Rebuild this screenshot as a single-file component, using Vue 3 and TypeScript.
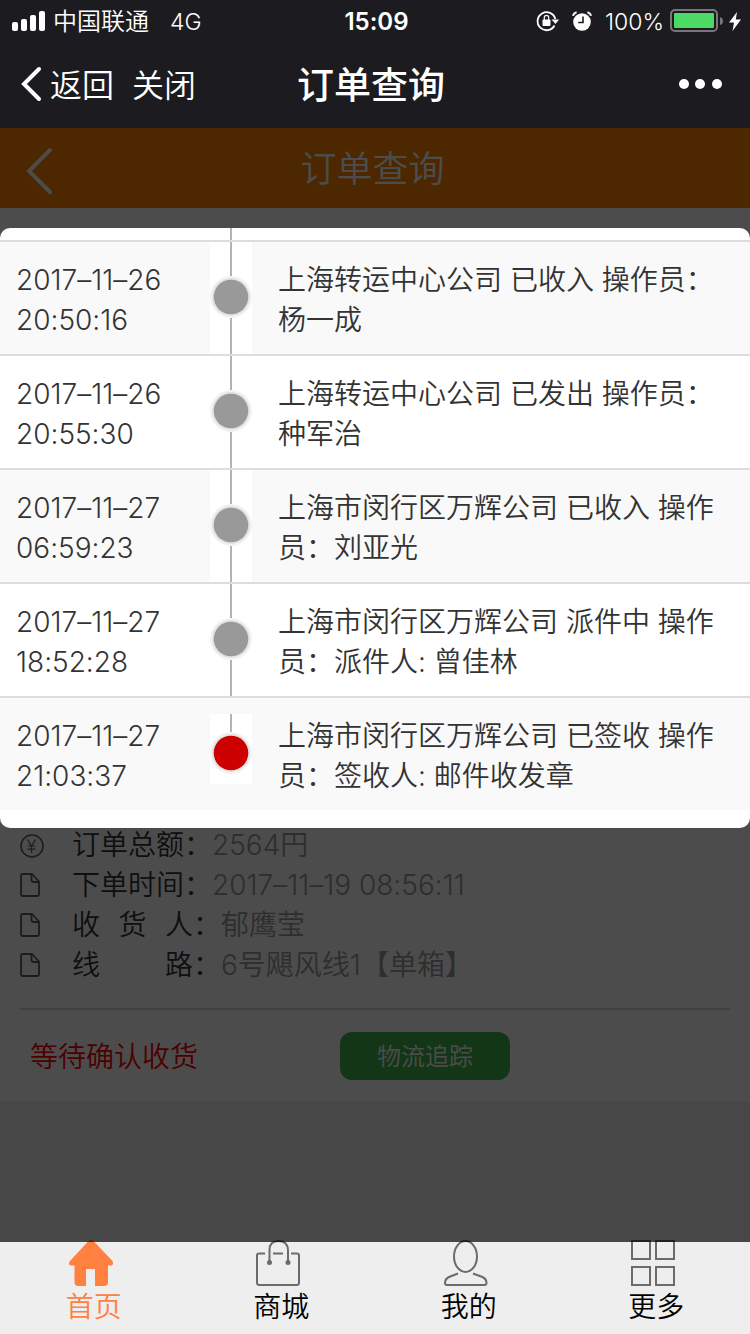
<script setup lang="ts">
interface TrackEntry {
  date: string
  time: string
  text: string
  done?: boolean
}

interface OrderField {
  icon: 'yen' | 'doc'
  label: string
  value: string
  wide?: boolean
}

interface Tab {
  id: 'home' | 'shop' | 'mine' | 'more'
  label: string
}

const entries: TrackEntry[] = [
  { date: '2017–11–26', time: '20:50:16', text: '上海转运中心公司 已收入 操作员：杨一成' },
  { date: '2017–11–26', time: '20:55:30', text: '上海转运中心公司 已发出 操作员：种军治' },
  { date: '2017–11–27', time: '06:59:23', text: '上海市闵行区万辉公司 已收入 操作员：刘亚光' },
  { date: '2017–11–27', time: '18:52:28', text: '上海市闵行区万辉公司 派件中 操作员：派件人: 曾佳林' },
  { date: '2017–11–27', time: '21:03:37', text: '上海市闵行区万辉公司 已签收 操作员：签收人: 邮件收发章', done: true },
]

const fields: OrderField[] = [
  { icon: 'yen', label: '订单总额', value: '2564円' },
  { icon: 'doc', label: '下单时间', value: '2017–11–19 08:56:11' },
  { icon: 'doc', label: '收 货 人', value: '郁鹰莹', wide: true },
  { icon: 'doc', label: '线 路', value: '6号飓风线1【单箱】', wide: true },
]

const tabs: Tab[] = [
  { id: 'home', label: '首页' },
  { id: 'shop', label: '商城' },
  { id: 'mine', label: '我的' },
  { id: 'more', label: '更多' },
]
</script>

<template>
  <div class="screen">
    <div class="status">
      <div class="status-left">
        <svg width="34" height="20" viewBox="0 0 34 20" fill="#fff" aria-hidden="true">
          <rect x="0" y="11" width="6" height="9" rx="2" />
          <rect x="9" y="8" width="6" height="12" rx="2" />
          <rect x="18" y="4" width="6" height="16" rx="2" />
          <rect x="27" y="0" width="6" height="20" rx="2" />
        </svg>
        <span class="carrier">中国联通</span>
        <span>4G</span>
      </div>
      <div class="clock">15:09</div>
      <div class="status-right">
        <svg class="lock" width="24" height="22" viewBox="0 0 24 22" aria-hidden="true">
          <path d="M18.500 15.500A9 9 0 1 1 19.300 9" fill="none" stroke="#fff" stroke-width="1.800" />
          <path d="M15.500 9.500h7.500L19.500 14z" fill="#fff" />
          <rect x="6.500" y="9.500" width="8" height="6.500" rx="1" fill="#fff" />
          <path d="M8.300 10V7.600a2.200 2.200 0 0 1 4.400 0V10" fill="none" stroke="#fff" stroke-width="1.200" />
        </svg>
        <svg class="alarm" width="20" height="20" viewBox="0 0 20 20" aria-hidden="true">
          <circle cx="10" cy="11" r="8.800" fill="#fff" />
          <path d="M.9 4.800Q1.700 1.900 4.600 1.200M19.100 4.800Q18.300 1.900 15.400 1.200" fill="none" stroke="#fff" stroke-width="2" />
          <path d="M11 5.500V11.500H6.200" fill="none" stroke="#1c1b20" stroke-width="1.600" />
        </svg>
        <span>100%</span>
        <svg class="battery" width="54" height="24" viewBox="0 0 54 24" aria-hidden="true">
          <rect x="1" y="1" width="46" height="21" rx="4" fill="none" stroke="#77767a" stroke-width="2" />
          <rect x="4" y="4" width="40" height="15" rx="1" fill="#4cd964" />
          <path d="M50 8q3 1 3 4t-3 4z" fill="#77767a" />
        </svg>
        <svg width="12" height="19" viewBox="0 0 12 19" fill="#fff" aria-hidden="true">
          <path d="M8 0L0 10.500H5L3.500 19L12 7.500H6.800z" />
        </svg>
      </div>
    </div>

    <header class="navbar">
      <div class="nav-actions">
        <button type="button" class="nav-btn">
          <svg width="22" height="36" viewBox="0 0 22 36" aria-hidden="true">
            <path d="M19 3L4 18L19 33" fill="none" stroke="#fff" stroke-width="4" stroke-linecap="round" />
          </svg>
          <span class="nav-text">返回</span>
        </button>
        <button type="button" class="nav-btn"><span class="nav-text">关闭</span></button>
      </div>
      <h1 class="nav-title">订单查询</h1>
      <button type="button" class="nav-more" aria-label="更多选项">
        <svg width="44" height="12" viewBox="0 0 44 12" fill="#fff" aria-hidden="true">
          <circle cx="6" cy="6" r="5" />
          <circle cx="22" cy="6" r="5" />
          <circle cx="39" cy="6" r="5" />
        </svg>
      </button>
    </header>

    <main class="view">
      <div class="page-head">
        <button type="button" class="page-back" aria-label="返回">
          <svg width="28" height="48" viewBox="0 0 28 48" aria-hidden="true">
            <path d="M25 3L4 24L25 45" fill="none" stroke="#fff" stroke-width="4" stroke-linecap="round" />
          </svg>
        </button>
        <h2 class="page-title">订单查询</h2>
      </div>

      <section class="order">
        <dl class="fields">
          <div v-for="field in fields" :key="field.label" class="field">
            <svg v-if="field.icon === 'yen'" class="field-icon" width="24" height="26" viewBox="0 0 24 26" fill="none" stroke="#606060" stroke-width="1.600" aria-hidden="true">
              <circle cx="12" cy="14" r="11" />
              <path stroke-width="1.200" d="M7.500 7.500L11.500 14L15.500 7.500M11.500 14V21M7.500 14H15.500M7.500 17.200H15.500" />
            </svg>
            <svg v-else class="field-icon" width="24" height="26" viewBox="0 0 24 26" fill="none" stroke="#606060" stroke-width="1.800" stroke-linejoin="round" aria-hidden="true">
              <path d="M12 2H2.500Q1 2 1 3.500V22.500Q1 24 2.500 24H17.500Q19 24 19 22.500V9.500zM11.500 2V8Q11.500 10 13.500 10H19" />
            </svg>
            <dt class="label"><span class="label-text" :class="{ wide: field.wide }">{{ field.label }}</span>：</dt>
            <dd class="value">{{ field.value }}</dd>
          </div>
        </dl>
        <div class="order-foot">
          <span class="state">等待确认收货</span>
          <button type="button" class="trace-btn">物流追踪</button>
        </div>
      </section>

      <div class="mask">
        <div class="dialog" role="dialog" aria-label="物流追踪">
          <table class="track">
            <tbody>
              <tr class="lead">
                <td class="when"></td>
                <td class="rail"></td>
                <td class="what"></td>
              </tr>
              <tr v-for="entry in entries" :key="entry.date + entry.time" :class="{ done: entry.done }">
                <td class="when">
                  <span class="stamp">{{ entry.date }}</span>
                  <span class="stamp">{{ entry.time }}</span>
                </td>
                <td class="rail">
                  <svg width="42" height="70" viewBox="0 0 42 70" aria-hidden="true">
                    <template v-if="entry.done">
                      <rect width="42" height="70" fill="#fff" />
                      <rect x="20" width="2" height="20" fill="#b3b3b3" />
                    </template>
                    <circle cx="21" cy="39" r="21" fill="#f3f3f3" />
                    <circle cx="21" cy="39" r="19" fill="#e2e2e2" />
                    <circle cx="21" cy="39" r="17.300" :fill="entry.done ? '#c00' : '#999'" />
                  </svg>
                </td>
                <td class="what">{{ entry.text }}</td>
              </tr>
            </tbody>
          </table>
        </div>
      </div>
    </main>

    <nav class="tabbar">
      <a v-for="tab in tabs" :key="tab.id" href="#" class="tab" :class="{ active: tab.id === 'home' }">
        <svg class="tab-icon" width="44" height="46" viewBox="0 0 44 46" fill="none" stroke="#6b6b6b" stroke-width="2" aria-hidden="true">
          <path v-if="tab.id === 'home'" fill="#ff8040" stroke="none" d="M19.500 1Q22 -1 24.500 1L43.500 21Q45 25.500 42 25.500H39V42Q39 46 35 46H26V29H17V46H9Q5.500 46 5.500 42V25.500H2Q-1 25.500 .5 21.500z" />
          <g v-else-if="tab.id === 'shop'">
            <path d="M9 13.500H3Q1 13.500 1 15.500V42.500Q1 45 3.500 45H40.500Q43 45 43 42.500V15.500Q43 13.500 41 13.500H35M17 13.500H27" />
            <path d="M13.500 22V10Q13.500 1 22.500 1T32 10V22" />
            <circle cx="13.500" cy="22.500" r="1.500" fill="#6b6b6b" />
            <circle cx="32" cy="22.500" r="1.500" fill="#6b6b6b" />
          </g>
          <g v-else-if="tab.id === 'mine'">
            <ellipse cx="21.500" cy="16.500" rx="11.500" ry="15.500" />
            <path d="M14 33.500L5 37Q1 39 1 43Q1 45 3 45H40.500Q42.500 45 42.500 43Q42.500 39 38.500 37L29 33.500" />
          </g>
          <g v-else>
            <rect x="1" y="1" width="18" height="18" />
            <rect x="25" y="1" width="18" height="18" />
            <rect x="1" y="27" width="18" height="18" />
            <rect x="25" y="27" width="18" height="18" />
          </g>
        </svg>
        <span class="tab-label">{{ tab.label }}</span>
      </a>
    </nav>
  </div>
</template>

<style>
body {
  margin: 0;
}
</style>

<style scoped>
.screen {
  display: flex;
  flex-direction: column;
  min-height: 100vh;
  font-family: Inter, "Noto Sans CJK SC", sans-serif;
  font-size: 28px;
  font-weight: 350;
  line-height: 40px;
  font-feature-settings: "calt" 0;
  color: #333;
}

button {
  padding: 0;
  border: 0;
  background: none;
  font: inherit;
  color: inherit;
}

svg {
  display: block;
  flex: none;
}

.status {
  display: grid;
  grid-template-columns: 1fr auto 1fr;
  align-items: center;
  height: 40px;
  padding: 0 9px 0 12px;
  background: #1c1b20;
  color: #fff;
  font-size: 23px;
}

.status-left,
.status-right {
  display: flex;
  align-items: center;
}

.status-right {
  justify-content: flex-end;
}

.status span,
.clock {
  padding-top: 2px;
}

.carrier {
  margin: 0 21px 0 7px;
  font-size: 24px;
}

.clock {
  font-size: 24px;
  font-weight: 600;
}

.lock {
  margin-right: 12px;
}

.alarm {
  margin-right: 13px;
}

.battery {
  margin: 0 5px 0 6px;
}

.navbar {
  display: grid;
  grid-template-columns: 1fr auto 1fr;
  align-items: center;
  height: 88px;
  padding: 0 28px 0 20px;
  background: #1c1b20;
  color: #fff;
}

.nav-actions {
  display: flex;
  gap: 18px;
}

.nav-btn {
  display: flex;
  align-items: center;
  gap: 8px;
  font-size: 32px;
}

.nav-text {
  padding-top: 4px;
}

.nav-title {
  margin: 0;
  padding-top: 4px;
  font-size: 37px;
  font-weight: 500;
}

.nav-more {
  justify-self: end;
}

.view {
  position: relative;
  display: flex;
  flex: 1;
  flex-direction: column;
  background: #ededed;
}

.page-head {
  display: grid;
  grid-template-columns: 1fr auto 1fr;
  align-items: center;
  height: 80px;
  padding: 0 30px 0 25px;
  background: #ff8200;
  color: #fff;
}

.page-back {
  justify-self: start;
  margin-top: 6px;
}

.page-title {
  margin: 0;
  padding-top: 2px;
  font-size: 36px;
  font-weight: 350;
}

.order {
  display: flex;
  flex: 1;
  flex-direction: column;
  justify-content: flex-end;
  margin-bottom: 140px;
  padding: 0 20px;
  background: #fff;
}

.fields {
  margin: 0;
  padding-bottom: 23px;
  border-bottom: 2px solid #d8d8d8;
}

.field {
  display: flex;
  align-items: center;
}

.field-icon {
  margin-right: 28px;
}

.label {
  display: flex;
}

.label-text {
  width: 112px;
  text-align-last: justify;
}

.label-text.wide {
  width: 121px;
}

.value {
  margin: 0;
  color: #999;
}

.order-foot {
  display: flex;
  align-items: center;
  padding: 22px 10px;
}

.state {
  width: 310px;
  padding-top: 2px;
  color: #f00;
}

.trace-btn {
  width: 170px;
  height: 48px;
  padding-top: 2px;
  border-radius: 12px;
  background: #3fb54a;
  color: #fff;
  font-size: 24px;
}

.mask {
  position: absolute;
  inset: 0;
  z-index: 2;
  padding-top: 100px;
  background: rgba(0, 0, 0, 0.7);
}

.dialog {
  overflow: hidden;
  padding-bottom: 18px;
  border-radius: 10px;
  background: #fff;
}

.track {
  width: 100%;
  border-collapse: separate;
  border-spacing: 0;
}

.track td {
  padding: 18px 0 14px;
  border-top: 2px solid #ddd;
  vertical-align: top;
}

.track .when {
  width: 28%;
  box-sizing: border-box;
  padding-left: 16px;
}

.stamp {
  display: block;
}

.track .what {
  padding-right: 16px;
  padding-left: 26px;
}

.track tr:nth-child(even) {
  background: #f9f9f9;
}

.track .rail {
  width: 42px;
  padding: 16px 0;
  background: linear-gradient(90deg, #fff 20px, #b3b3b3 20px, #b3b3b3 22px, #fff 22px) padding-box;
}

.track .done .rail {
  background: none;
}

.track .lead td {
  height: 12px;
  padding: 0;
  border-top: 0;
}

.tabbar {
  position: relative;
  z-index: 1;
  display: grid;
  grid-template-columns: repeat(4, 1fr);
  height: 92px;
  background: #eee;
}

.tab {
  display: flex;
  flex-direction: column;
  align-items: center;
  margin-top: -2px;
  color: #000;
  text-decoration: none;
}

.tab-icon {
  margin-right: 6px;
}

.tab-label {
  padding-top: 1px;
}

.tab.active {
  color: #ff8040;
}
</style>
